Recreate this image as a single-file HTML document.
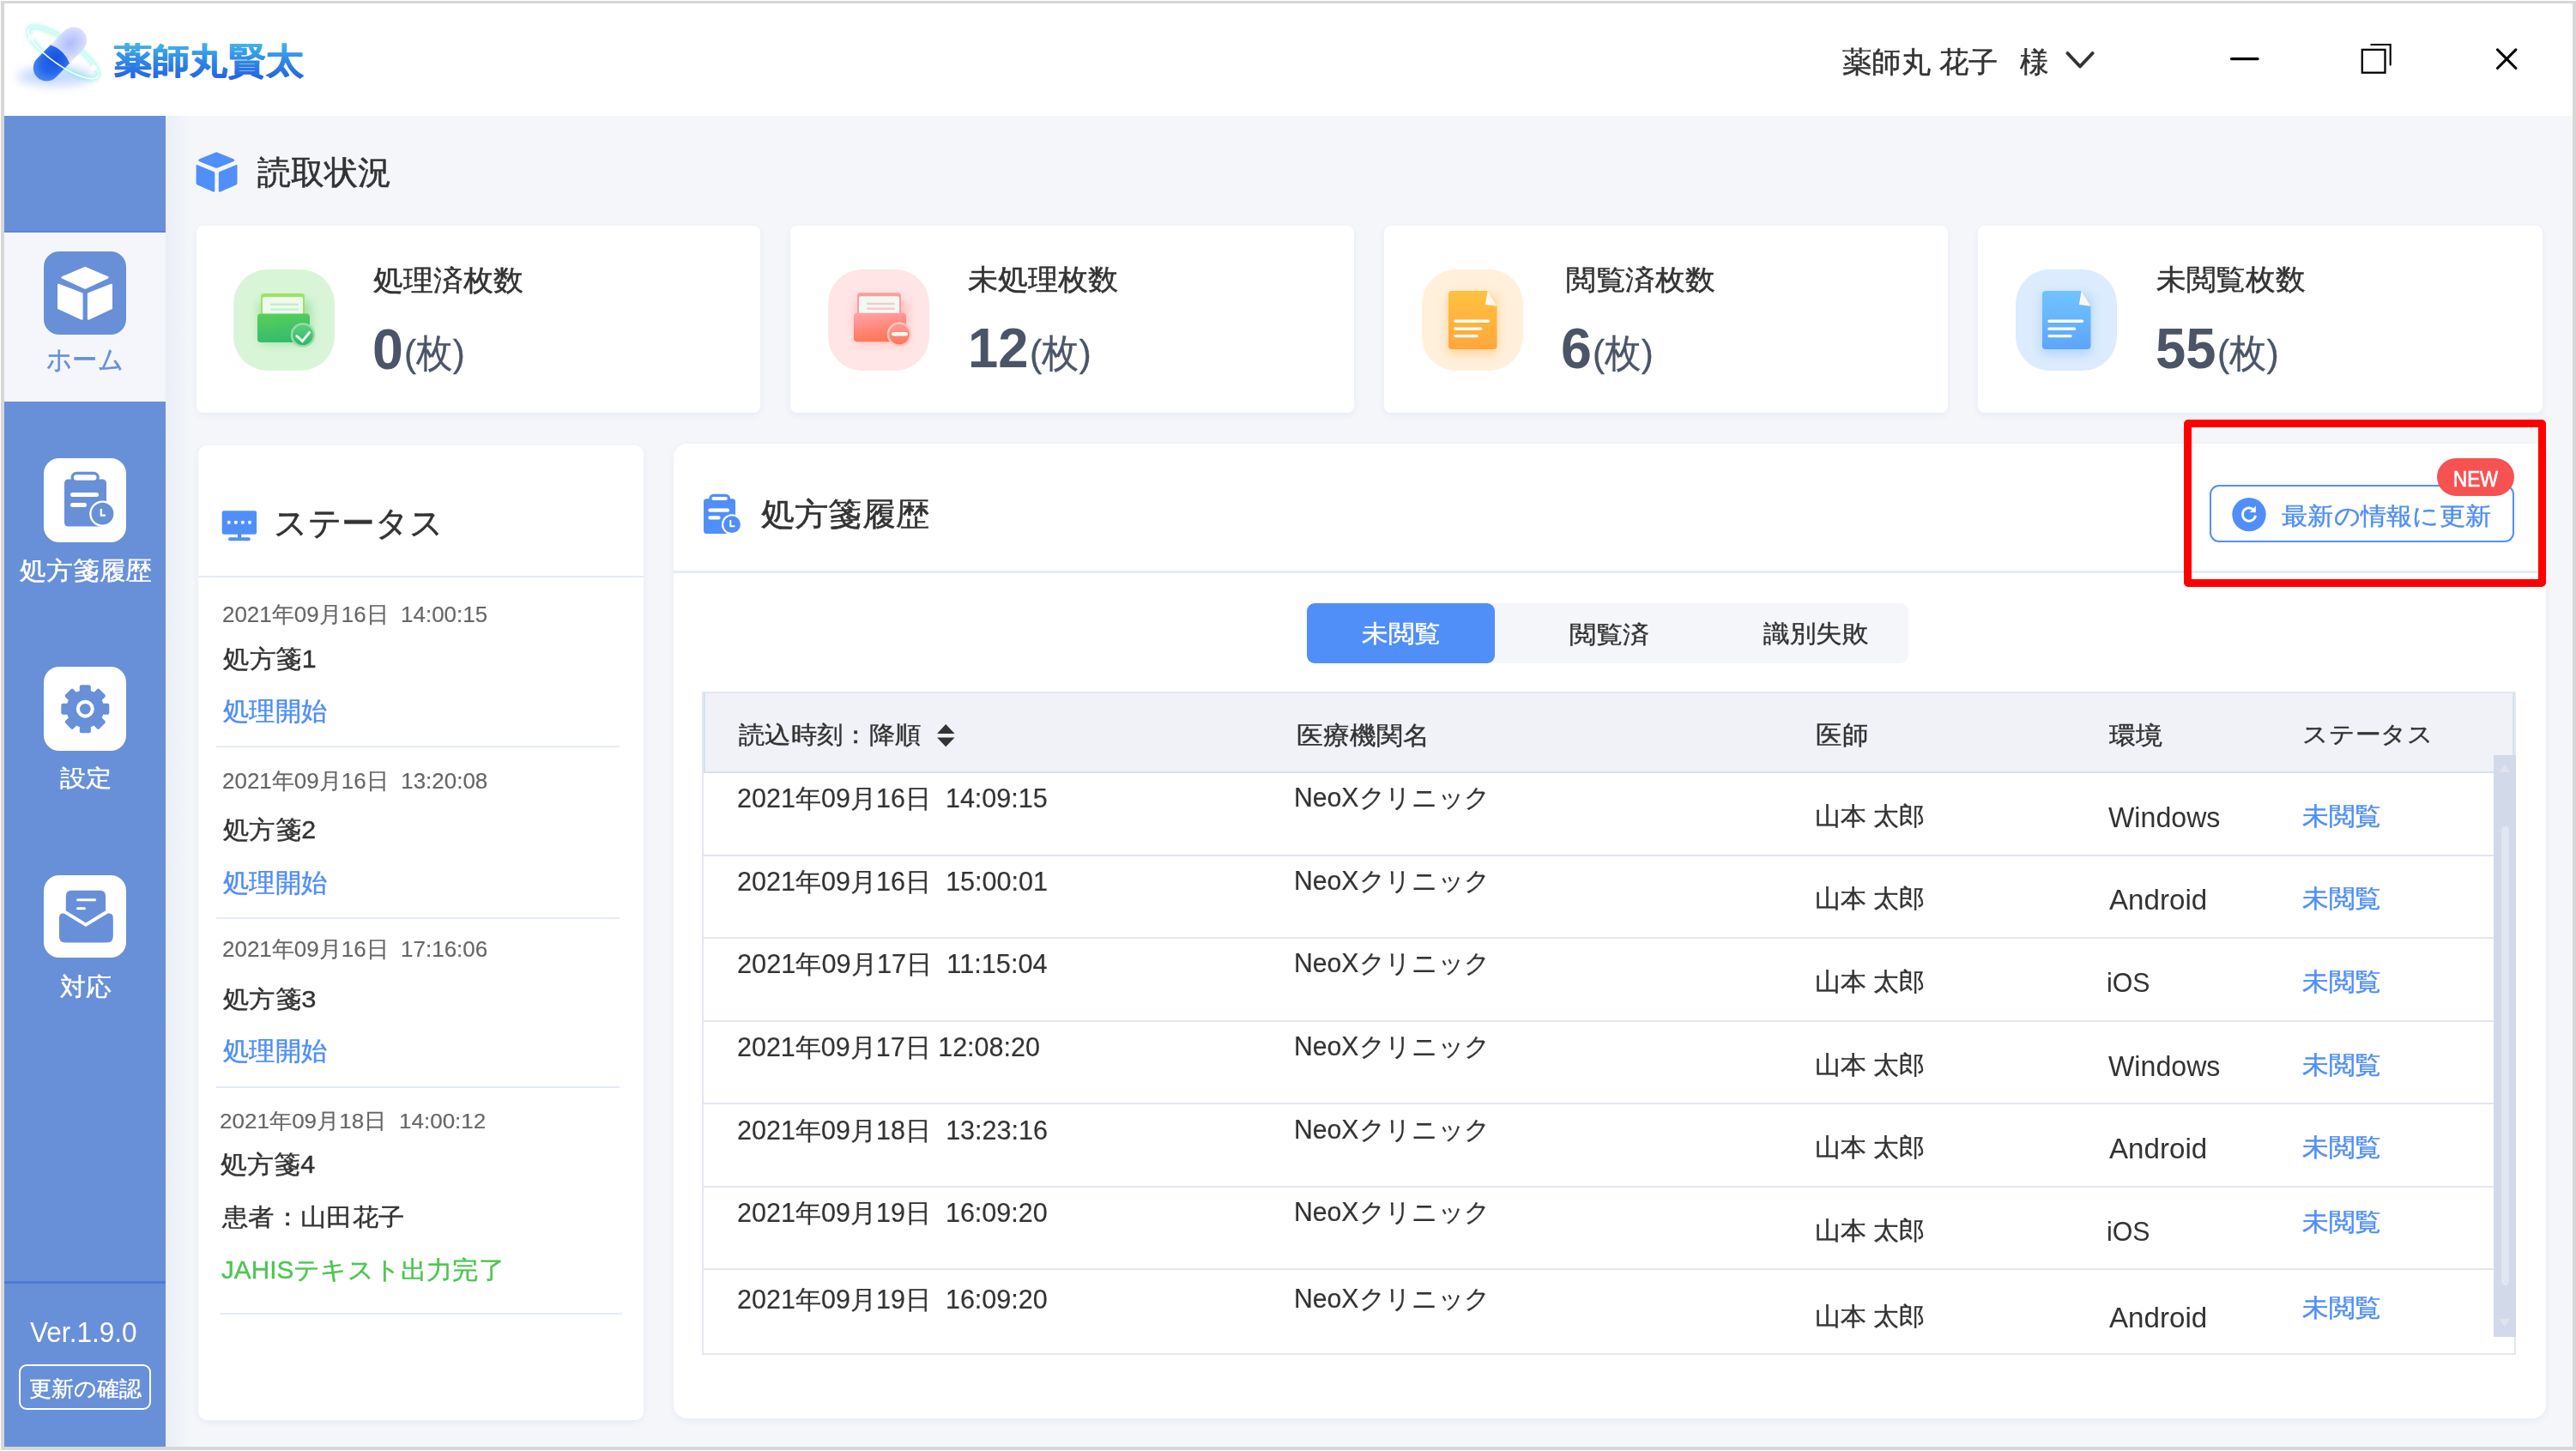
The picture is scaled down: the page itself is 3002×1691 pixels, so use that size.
<!DOCTYPE html>
<html lang="ja"><head><meta charset="utf-8"><title>薬師丸賢太</title>
<style>
html,body{margin:0;padding:0;}
body{width:3002px;height:1691px;position:relative;overflow:hidden;background:#ffffff;font-family:"Liberation Sans",sans-serif;}
.t{position:absolute;white-space:pre;line-height:1;transform-origin:0 0;}
</style></head><body>
<div style="position:absolute;left:1px;top:1px;width:3001px;height:1689px;background:#d7d7d7"></div>
<div style="position:absolute;left:5px;top:4px;width:2993px;height:1682px;background:#f4f6fa"></div>
<div style="position:absolute;left:5px;top:4px;width:2993px;height:131px;background:#ffffff"></div>
<svg style="position:absolute;left:0px;top:0px" width="135" height="125" viewBox="0 0 135 125">
<defs>
 <filter id="blur6" x="-50%" y="-50%" width="200%" height="200%"><feGaussianBlur stdDeviation="6"/></filter>
 <filter id="blur2" x="-50%" y="-50%" width="200%" height="200%"><feGaussianBlur stdDeviation="2.2"/></filter>
 <radialGradient id="pillDark" cx="0.62" cy="0.5" r="0.8" fx="0.75" fy="0.5">
  <stop offset="0" stop-color="#1552e2"/><stop offset="0.5" stop-color="#2566ea"/><stop offset="0.85" stop-color="#4d8cf4"/><stop offset="1" stop-color="#78b0fb"/>
 </radialGradient>
 <radialGradient id="pillLight" cx="0.45" cy="0.5" r="0.7">
  <stop offset="0" stop-color="#aebdfa"/><stop offset="0.6" stop-color="#cdd6fc"/><stop offset="1" stop-color="#eef0fe"/>
 </radialGradient>
</defs>
<ellipse cx="64" cy="89" rx="44" ry="11" fill="#8fb6ff" opacity="0.5" filter="url(#blur6)"/>
<g transform="translate(73.7 61.5) rotate(35)">
 <ellipse cx="0" cy="0" rx="48.5" ry="14.5" fill="none" stroke="#69f0dc" stroke-width="5" opacity="0.55" filter="url(#blur2)"/>
</g>
<g transform="translate(73.7 61.5) rotate(35)">
 <path d="M -48.5 0 A 48.5 14.5 0 0 1 48.5 0" fill="none" stroke="#e6fdf8" stroke-width="1.4"/>
</g>
<g transform="translate(70 63) rotate(-45.5)">
 <path d="M0 -15.5 H22.5 A15.5 15.5 0 0 1 22.5 15.5 H0 Z" fill="url(#pillLight)"/>
 <path d="M0 -15.5 H-22.5 A15.5 15.5 0 0 0 -22.5 15.5 H0 Q7 0 0 -15.5 Z" fill="url(#pillDark)"/>
</g>
<g transform="translate(73.7 61.5) rotate(35)">
 <path d="M -48.5 0 A 48.5 14.5 0 0 0 48.5 0" fill="none" stroke="#ffffff" stroke-width="1.6"/>
</g>
<circle cx="36.5" cy="43.6" r="3.6" fill="#ffffff"/>
<circle cx="109.2" cy="79.1" r="3.6" fill="#ffffff"/>
</svg>
<svg style="position:absolute;left:2400px;top:45px" width="560" height="50" viewBox="2400 45 560 50">
<path d="M2409.5 62 L2424 77.5 L2438.6 62" fill="none" stroke="#333" stroke-width="4" stroke-linecap="round" stroke-linejoin="round"/>
<line x1="2600.5" y1="68.6" x2="2631" y2="68.6" stroke="#000" stroke-width="3.3" stroke-linecap="round"/>
<rect x="2752.8" y="57.9" width="26.7" height="26.8" fill="none" stroke="#000" stroke-width="2.3"/>
<path d="M2763.3 52 H2785.7 V75.6" fill="none" stroke="#000" stroke-width="2.1" stroke-linecap="round"/>
<path d="M2910.5 57.9 L2931.9 79.5 M2931.9 57.9 L2910.5 79.5" stroke="#000" stroke-width="3.1" stroke-linecap="round"/>
</svg>
<div style="position:absolute;left:193px;top:135px;width:29px;height:1551px;background:linear-gradient(90deg,rgba(60,90,170,0.055),rgba(60,90,170,0))"></div>
<div style="position:absolute;left:5px;top:135px;width:188px;height:1551px;background:#6890d8"></div>
<div style="position:absolute;left:5px;top:269px;width:188px;height:2px;background:#5a84d4"></div>
<div style="position:absolute;left:5px;top:271px;width:188px;height:197px;background:#f4f6fb"></div>
<div style="position:absolute;left:5px;top:1493px;width:188px;height:2.5px;background:#4f7bd0"></div>
<div style="position:absolute;left:51px;top:293px;width:96.4px;height:97px;background:#6890d8;border-radius:18px"></div>
<div style="position:absolute;left:51px;top:533.6px;width:96.4px;height:98.19999999999993px;background:#ffffff;border-radius:18px"></div>
<div style="position:absolute;left:51px;top:776.8px;width:96.4px;height:98.10000000000002px;background:#ffffff;border-radius:18px"></div>
<div style="position:absolute;left:51px;top:1019.8px;width:96.4px;height:96.70000000000005px;background:#ffffff;border-radius:18px"></div>
<svg style="position:absolute;left:51px;top:293px" width="97" height="97" viewBox="0 0 97 97">
<g fill="#ffffff" stroke="#ffffff" stroke-width="2.4" stroke-linejoin="round">
<path d="M21.6 30.3 L48.2 19.1 L74.5 30.3 L48.2 42.6 Z"/>
<path d="M17.2 38.9 L44.4 49.3 L44.4 78.6 L17.2 66.2 Z"/>
<path d="M52.1 49.3 L78.8 38.9 L78.8 66.2 L52.1 78.6 Z"/>
</g></svg>
<svg style="position:absolute;left:51px;top:533.6px" width="97" height="98" viewBox="0 0 97 98">
<rect x="24" y="24.5" width="49" height="55" rx="4.5" fill="#6890d8"/>
<rect x="33.2" y="17.5" width="30" height="10" rx="5" fill="#ffffff" stroke="#6890d8" stroke-width="3.4"/>
<rect x="31" y="40" width="33" height="5" rx="2.5" fill="#ffffff"/>
<rect x="31" y="52" width="19" height="5" rx="2.5" fill="#ffffff"/>
<circle cx="68.5" cy="64.7" r="15.3" fill="#ffffff"/>
<circle cx="68.5" cy="64.7" r="12.9" fill="#6890d8"/>
<path d="M66.8 59 V66.6 H72" fill="none" stroke="#ffffff" stroke-width="2.2"/>
</svg>
<svg style="position:absolute;left:51px;top:776.8px" width="97" height="98" viewBox="0 0 97 98">
<g transform="translate(48.3 49.2)" fill="#6890d8">
<circle r="22"/>
<g id="teeth">
<rect x="-6.5" y="-28" width="13" height="10" rx="2"/>
<rect x="-6.5" y="18" width="13" height="10" rx="2"/>
<rect x="-28" y="-6.5" width="10" height="13" rx="2"/>
<rect x="18" y="-6.5" width="10" height="13" rx="2"/>
<g transform="rotate(45)">
<rect x="-6.5" y="-28" width="13" height="10" rx="2"/>
<rect x="-6.5" y="18" width="13" height="10" rx="2"/>
<rect x="-28" y="-6.5" width="10" height="13" rx="2"/>
<rect x="18" y="-6.5" width="10" height="13" rx="2"/>
</g></g>
<circle r="10.5" fill="#ffffff"/>
<circle r="6.3" fill="#6890d8"/>
</g></svg>
<svg style="position:absolute;left:51px;top:1019.8px" width="97" height="97" viewBox="0 0 97 97">
<path d="M25.8 24.3 Q25.8 17.8 32.3 17.8 H65.6 Q72.1 17.8 72.1 24.3 V41.2 L49 55.6 L25.8 41.2 Z" fill="#6890d8"/>
<rect x="38" y="27.3" width="23.1" height="3" rx="1.5" fill="#ffffff"/>
<rect x="38" y="37.2" width="11" height="3" rx="1.5" fill="#ffffff"/>
<path d="M17.9 50 Q17.9 43.8 23.6 44.6 L49 60 L74.6 44.6 Q80.8 43.8 80.8 50 V71.3 Q80.8 78.5 73.6 78.5 H25.1 Q17.9 78.5 17.9 71.3 Z" fill="#6890d8"/>
</svg>
<div style="position:absolute;left:22.4px;top:1590.4px;width:153.79999999999998px;height:53.09999999999991px;border:2.2px solid #ffffff;border-radius:9px;box-sizing:border-box"></div>
<svg style="position:absolute;left:226px;top:175px" width="54" height="52" viewBox="226 175 54 52">
<g fill="#508ff8">
<path d="M252.3 177.2 L272 185.2 Q274.5 186.7 272 188.2 L254 195.5 Q252.3 196.2 250.6 195.5 L232.6 188.2 Q230 186.7 232.6 185.2 Z"/>
<path d="M229.5 192 L249 200 Q250.3 200.6 250.3 202 L250.3 222.2 Q250.3 224.2 248.3 223.4 L230 215.4 Q228.6 214.7 228.6 213.3 L228.6 193 Q228.6 191.6 229.5 192 Z"/>
<path d="M275.6 192 L256.1 200 Q254.8 200.6 254.8 202 L254.8 222.2 Q254.8 224.2 256.8 223.4 L275.1 215.4 Q276.5 214.7 276.5 213.3 L276.5 193 Q276.5 191.6 275.6 192 Z"/>
</g></svg>
<div style="position:absolute;left:229px;top:262.5px;width:657px;height:218.5px;background:#ffffff;border-radius:8px;box-shadow:0 3px 8px rgba(40,70,140,0.06)"></div>
<div style="position:absolute;left:921px;top:262.5px;width:657px;height:218.5px;background:#ffffff;border-radius:8px;box-shadow:0 3px 8px rgba(40,70,140,0.06)"></div>
<div style="position:absolute;left:1613px;top:262.5px;width:657px;height:218.5px;background:#ffffff;border-radius:8px;box-shadow:0 3px 8px rgba(40,70,140,0.06)"></div>
<div style="position:absolute;left:2305px;top:262.5px;width:658px;height:218.5px;background:#ffffff;border-radius:8px;box-shadow:0 3px 8px rgba(40,70,140,0.06)"></div>
<div style="position:absolute;left:272px;top:314px;width:118px;height:118px;background:#d9f5d7;border-radius:40px"></div>
<div style="position:absolute;left:965px;top:314px;width:118px;height:118px;background:#ffe5e5;border-radius:40px"></div>
<div style="position:absolute;left:1657px;top:314px;width:118px;height:118px;background:#fff0dc;border-radius:40px"></div>
<div style="position:absolute;left:2349px;top:314px;width:118px;height:118px;background:#dcebfd;border-radius:40px"></div>
<svg style="position:absolute;left:272px;top:314px" width="118" height="118" viewBox="0 0 118 118">
<defs>
<linearGradient id="fggreen" x1="0" y1="0" x2="0.25" y2="1"><stop offset="0" stop-color="#5bcf57"/><stop offset="1" stop-color="#33bd6c"/></linearGradient>
<linearGradient id="bggreen" x1="0" y1="0" x2="0" y2="1"><stop offset="0" stop-color="#5bd07a"/><stop offset="1" stop-color="#2db86a"/></linearGradient>
<filter id="glgreen" x="-50%" y="-50%" width="200%" height="200%"><feGaussianBlur stdDeviation="6"/></filter>
</defs>
<g transform="translate(0 0)">
<rect x="30" y="36" width="60" height="50" rx="6" fill="#58c86a" opacity="0.45" filter="url(#glgreen)"/>
<rect x="32" y="28" width="51" height="26" rx="3.5" fill="#9de45f"/>
<rect x="34" y="32" width="47" height="22" rx="2" fill="#effaef"/>
<rect x="43" y="39.6" width="33" height="2.4" rx="1.2" fill="#c6ecd0"/>
<rect x="43" y="45.4" width="33" height="2.4" rx="1.2" fill="#c6ecd0"/>
<rect x="28" y="51.5" width="61" height="33.6" rx="4" fill="url(#fggreen)"/>
<circle cx="81" cy="76.4" r="14.2" fill="#9bdcae"/>
<circle cx="81" cy="76.4" r="11.8" fill="url(#bggreen)"/>
<path d="M74 77.7 L80.4 83.6 L88.5 73.6" fill="none" stroke="#ecfaef" stroke-width="2.9" stroke-linecap="square"/>
</g>
</svg>
<svg style="position:absolute;left:965px;top:314px" width="118" height="118" viewBox="0 0 118 118">
<defs>
<linearGradient id="fgred" x1="0" y1="0" x2="0.25" y2="1"><stop offset="0" stop-color="#ffa4ab"/><stop offset="1" stop-color="#ff7556"/></linearGradient>
<linearGradient id="bgred" x1="0" y1="0" x2="0" y2="1"><stop offset="0" stop-color="#ff9a9a"/><stop offset="1" stop-color="#ff7558"/></linearGradient>
<filter id="glred" x="-50%" y="-50%" width="200%" height="200%"><feGaussianBlur stdDeviation="6"/></filter>
</defs>
<g transform="translate(2 -0.8)">
<rect x="30" y="36" width="60" height="50" rx="6" fill="#ff8a80" opacity="0.45" filter="url(#glred)"/>
<rect x="32" y="28" width="51" height="26" rx="3.5" fill="#ff9b9f"/>
<rect x="34" y="32" width="47" height="22" rx="2" fill="#f0faf0"/>
<rect x="43" y="39.6" width="33" height="2.4" rx="1.2" fill="#f7c9cc"/>
<rect x="43" y="45.4" width="33" height="2.4" rx="1.2" fill="#f7c9cc"/>
<rect x="28" y="51.5" width="61" height="33.6" rx="4" fill="url(#fgred)"/>
<circle cx="81" cy="76.4" r="14.2" fill="#f7c8c2"/>
<circle cx="81" cy="76.4" r="11.8" fill="url(#bgred)"/>
<rect x="72" y="73.7" width="19" height="4.6" rx="2.3" fill="#f0faf0"/>
</g>
</svg>
<svg style="position:absolute;left:1657px;top:313px" width="118" height="118" viewBox="0 0 118 118">
<defs>
<linearGradient id="dgorange" x1="0" y1="0" x2="0" y2="1"><stop offset="0" stop-color="#ffc23f"/><stop offset="1" stop-color="#ffa63d"/></linearGradient>
<filter id="dglorange" x="-50%" y="-50%" width="200%" height="200%"><feGaussianBlur stdDeviation="6"/></filter>
</defs>
<rect x="30" y="30" width="58" height="70" rx="6" fill="#ffb04a" opacity="0.45" filter="url(#dglorange)"/>
<path d="M35 26 H76.6 L87.5 43.7 V90 Q87.5 94 83.5 94 H35 Q31 94 31 90 V30 Q31 26 35 26 Z" fill="url(#dgorange)"/>
<path d="M76.6 26 L87.5 43.7 L73.9 41.9 Z" fill="#fff6f3"/>
<rect x="37.4" y="59.6" width="41.6" height="3.3" rx="1.65" fill="#ffffff"/>
<rect x="37.4" y="68.5" width="32.8" height="3.3" rx="1.65" fill="#ffffff"/>
<rect x="37.4" y="76.9" width="28.4" height="3.3" rx="1.65" fill="#ffffff"/>
</svg>
<svg style="position:absolute;left:2349px;top:313px" width="118" height="118" viewBox="0 0 118 118">
<defs>
<linearGradient id="dgblue" x1="0" y1="0" x2="0" y2="1"><stop offset="0" stop-color="#70c4fd"/><stop offset="1" stop-color="#5ea4fb"/></linearGradient>
<filter id="dglblue" x="-50%" y="-50%" width="200%" height="200%"><feGaussianBlur stdDeviation="6"/></filter>
</defs>
<rect x="30" y="30" width="58" height="70" rx="6" fill="#7ab8fb" opacity="0.45" filter="url(#dglblue)"/>
<path d="M35 26 H76.6 L87.5 43.7 V90 Q87.5 94 83.5 94 H35 Q31 94 31 90 V30 Q31 26 35 26 Z" fill="url(#dgblue)"/>
<path d="M76.6 26 L87.5 43.7 L73.9 41.9 Z" fill="#fff6f3"/>
<rect x="37.4" y="59.6" width="41.6" height="3.3" rx="1.65" fill="#ffffff"/>
<rect x="37.4" y="68.5" width="32.8" height="3.3" rx="1.65" fill="#ffffff"/>
<rect x="37.4" y="76.9" width="28.4" height="3.3" rx="1.65" fill="#ffffff"/>
</svg>
<div style="position:absolute;left:230.8px;top:519px;width:519.2px;height:1136px;background:#ffffff;border-radius:10px;box-shadow:0 3px 8px rgba(40,70,140,0.06)"></div>
<div style="position:absolute;left:231px;top:671px;width:519px;height:2px;background:#e4ebf7"></div>
<div style="position:absolute;left:252px;top:869px;width:470px;height:2px;background:#e4ebf7"></div>
<div style="position:absolute;left:252px;top:1068.5px;width:470px;height:2.0px;background:#e4ebf7"></div>
<div style="position:absolute;left:252px;top:1266px;width:470px;height:2px;background:#e4ebf7"></div>
<div style="position:absolute;left:256px;top:1529.5px;width:469px;height:2.0px;background:#e4ebf7"></div>
<svg style="position:absolute;left:256px;top:593px" width="46" height="40" viewBox="256 593 46 40">
<rect x="258.7" y="595.2" width="40.4" height="27.5" rx="2.2" fill="#508ff8"/>
<rect x="277" y="622" width="4.2" height="5" fill="#508ff8"/>
<rect x="266" y="626.2" width="25.8" height="4" rx="2" fill="#508ff8"/>
<circle cx="266.8" cy="608.8" r="2.1" fill="#fff"/><circle cx="274.8" cy="608.8" r="2.1" fill="#fff"/>
<circle cx="282.8" cy="608.8" r="2.1" fill="#fff"/><circle cx="291" cy="608.8" r="2.1" fill="#fff"/>
</svg>
<div style="position:absolute;left:785px;top:516.5px;width:2182px;height:1136.5px;background:#ffffff;border-radius:16px;box-shadow:0 3px 8px rgba(40,70,140,0.06)"></div>
<div style="position:absolute;left:785px;top:665px;width:2182px;height:2.5px;background:#e4ebf7"></div>
<svg style="position:absolute;left:815px;top:570px" width="52" height="56" viewBox="815 570 52 56">
<rect x="820" y="581.2" width="37" height="40.8" rx="3.5" fill="#508ff8"/>
<rect x="827.8" y="577.3" width="21.6" height="7.2" rx="3.6" fill="#ffffff" stroke="#508ff8" stroke-width="3.2"/>
<rect x="825.4" y="592.6" width="24.6" height="4.1" rx="2" fill="#fff"/>
<rect x="825.4" y="601.3" width="14.2" height="4.3" rx="2" fill="#fff"/>
<circle cx="853" cy="611.2" r="12" fill="#fff"/>
<circle cx="853" cy="611.2" r="9.9" fill="#508ff8"/>
<path d="M851.3 606 V613.2 H856.3" fill="none" stroke="#fff" stroke-width="2"/>
</svg>
<div style="position:absolute;left:2575px;top:565px;width:355px;height:67px;border:2px solid #5090f8;border-radius:11px;box-sizing:border-box;background:#fff"></div>
<svg style="position:absolute;left:2599px;top:578px" width="44" height="44" viewBox="2599 578 44 44">
<circle cx="2621" cy="599.6" r="19.7" fill="#508ff8"/>
<path d="M2625.4 593.4 A 7.6 7.6 0 1 0 2628.5 600.7" fill="none" stroke="#fff" stroke-width="2.9"/>
<path d="M2628.9 589.6 L2628.9 597.2 L2621.6 597 Z" fill="#fff"/>
</svg>
<div style="position:absolute;left:2840px;top:534px;width:90px;height:44px;background:#f65252;border-radius:22px"></div>
<div style="position:absolute;left:1523px;top:703px;width:701px;height:70px;background:#f4f6fa;border-radius:9px"></div>
<div style="position:absolute;left:1523px;top:703px;width:219px;height:70px;background:#508ff8;border-radius:9px"></div>
<div style="position:absolute;left:818px;top:806px;width:2113.5px;height:772.5px;background:#ffffff;border:2px solid #e3e8f0;box-sizing:border-box"></div>
<div style="position:absolute;left:820px;top:808px;width:2110px;height:92.5px;background:#f0f2f7;border-left:2px solid #d3e2ee;border-right:2px solid #d3e2ee;box-sizing:border-box"></div>
<div style="position:absolute;left:820px;top:898.5px;width:2110px;height:2.2999999999999545px;background:#d5e2ee"></div>
<div style="position:absolute;left:820px;top:996px;width:2086px;height:2px;background:#e2e7f0"></div>
<div style="position:absolute;left:820px;top:1092px;width:2086px;height:2px;background:#e2e7f0"></div>
<div style="position:absolute;left:820px;top:1189px;width:2086px;height:2px;background:#e2e7f0"></div>
<div style="position:absolute;left:820px;top:1285px;width:2086px;height:2px;background:#e2e7f0"></div>
<div style="position:absolute;left:820px;top:1382px;width:2086px;height:2px;background:#e2e7f0"></div>
<div style="position:absolute;left:820px;top:1478px;width:2086px;height:2px;background:#e2e7f0"></div>
<svg style="position:absolute;left:1090px;top:842px" width="25" height="30" viewBox="1090 842 25 30">
<path d="M1102.2 843.9 L1112.5 855 L1092 855 Z" fill="#333"/>
<path d="M1102.2 870.3 L1112.5 859.6 L1092 859.6 Z" fill="#333"/>
</svg>
<div style="position:absolute;left:2906px;top:880px;width:25.5px;height:678px;background:#d2d9e8"></div>
<div style="position:absolute;left:2914.7px;top:963px;width:9.100000000000364px;height:535px;background:#e0e7f3;border-radius:5px"></div>
<svg style="position:absolute;left:2906px;top:880px" width="26" height="680" viewBox="2906 880 26 680">
<path d="M2919 890.5 L2925.5 900 L2912.5 900 Z" fill="#e0e3ec"/>
<path d="M2919 1546 L2925.5 1537 L2912.5 1537 Z" fill="#e0e3ec"/>
</svg>
<div style="position:absolute;left:2545px;top:489px;width:422px;height:195px;border:9px solid #ff0000;border-radius:5px;box-sizing:border-box"></div>
<svg style="position:absolute;left:0;top:0" width="420" height="135" viewBox="0 0 420 135"><defs><linearGradient id="logoG" x1="0" y1="0" x2="0" y2="1"><stop offset="0" stop-color="#46bcea"/><stop offset="0.5" stop-color="#2f88e6"/><stop offset="1" stop-color="#2360e2"/></linearGradient></defs><text transform="translate(132.50 85.00) scale(1.0714 1)" x="0" y="0" font-family="Liberation Sans, sans-serif" font-size="41.35" font-weight="700" fill="url(#logoG)" stroke="url(#logoG)" stroke-width="0.9" stroke-linejoin="round">薬師丸賢太</text></svg>
<div class="t" style="left:2146.81px;top:54.92px;font-size:34.11px;font-weight:400;color:#333333;-webkit-text-stroke:0.48px #333333;transform:scaleX(1.0102)">薬師丸 花子</div>
<div class="t" style="left:2353.66px;top:54.58px;font-size:34.11px;font-weight:400;color:#333333;-webkit-text-stroke:0.48px #333333;transform:scaleX(0.9877)">様</div>
<div class="t" style="left:54.31px;top:404.24px;font-size:31.75px;font-weight:400;color:#6890d8;-webkit-text-stroke:0.44px #6890d8;transform:scaleX(0.9203)">ホーム</div>
<div class="t" style="left:23.09px;top:650.80px;font-size:28.78px;font-weight:400;color:#ffffff;-webkit-text-stroke:0.40px #ffffff;transform:scaleX(1.0643)">処方箋履歴</div>
<div class="t" style="left:69.69px;top:893.20px;font-size:27.17px;font-weight:400;color:#ffffff;-webkit-text-stroke:0.38px #ffffff;transform:scaleX(1.1233)">設定</div>
<div class="t" style="left:69.70px;top:1136.00px;font-size:28.85px;font-weight:400;color:#ffffff;-webkit-text-stroke:0.40px #ffffff;transform:scaleX(1.0362)">対応</div>
<div class="t" style="left:35.48px;top:1537.06px;font-size:32.96px;font-weight:400;color:#ffffff;transform:scaleX(0.9577)">Ver.1.9.0</div>
<div class="t" style="left:33.50px;top:1606.25px;font-size:24.95px;font-weight:400;color:#ffffff;-webkit-text-stroke:0.35px #ffffff;transform:scaleX(1.0404)">更新の確認</div>
<div class="t" style="left:299.81px;top:182.65px;font-size:37.60px;font-weight:400;color:#333333;-webkit-text-stroke:0.53px #333333;transform:scaleX(1.0302)">読取状況</div>
<div class="t" style="left:435.25px;top:311.17px;font-size:32.58px;font-weight:400;color:#333333;-webkit-text-stroke:0.46px #333333;transform:scaleX(1.0572)">処理済枚数</div>
<div class="t" style="left:1127.80px;top:308.75px;font-size:33.25px;font-weight:400;color:#333333;-webkit-text-stroke:0.47px #333333;transform:scaleX(1.0636)">未処理枚数</div>
<div class="t" style="left:1824.61px;top:309.68px;font-size:32.32px;font-weight:400;color:#333333;-webkit-text-stroke:0.45px #333333;transform:scaleX(1.0858)">閲覧済枚数</div>
<div class="t" style="left:2512.81px;top:309.01px;font-size:32.99px;font-weight:400;color:#333333;-webkit-text-stroke:0.46px #333333;transform:scaleX(1.0502)">未閲覧枚数</div>
<div class="t" style="left:434.42px;top:373.96px;font-size:66.90px;font-weight:700;color:#4b5567;transform:scaleX(0.9654)">0</div>
<div class="t" style="left:1128.20px;top:373.14px;font-size:65.71px;font-weight:700;color:#4b5567;transform:scaleX(0.9643)">12</div>
<div class="t" style="left:1819.42px;top:373.07px;font-size:66.20px;font-weight:700;color:#4b5567;transform:scaleX(0.9756)">6</div>
<div class="t" style="left:2511.60px;top:372.26px;font-size:67.14px;font-weight:700;color:#4b5567;transform:scaleX(0.9433)">55</div>
<div class="t" style="left:471.47px;top:390.22px;font-size:44.61px;font-weight:400;color:#4b5567;-webkit-text-stroke:0.28px #4b5567;transform:scaleX(0.9462)">(枚)</div>
<div class="t" style="left:1199.93px;top:390.22px;font-size:44.61px;font-weight:400;color:#4b5567;-webkit-text-stroke:0.28px #4b5567;transform:scaleX(0.9608)">(枚)</div>
<div class="t" style="left:1856.47px;top:390.22px;font-size:44.61px;font-weight:400;color:#4b5567;-webkit-text-stroke:0.28px #4b5567;transform:scaleX(0.9462)">(枚)</div>
<div class="t" style="left:2584.43px;top:390.22px;font-size:44.61px;font-weight:400;color:#4b5567;-webkit-text-stroke:0.28px #4b5567;transform:scaleX(0.9608)">(枚)</div>
<div class="t" style="left:319.49px;top:590.36px;font-size:39.43px;font-weight:400;color:#333333;-webkit-text-stroke:0.55px #333333;transform:scaleX(0.9914)">ステータス</div>
<div class="t" style="left:259.00px;top:703.61px;font-size:25.87px;font-weight:400;color:#666666;-webkit-text-stroke:0.16px #666666;transform:scaleX(1.0032)">2021年09月16日  14:00:15</div>
<div class="t" style="left:260.00px;top:753.70px;font-size:28.78px;font-weight:400;color:#333333;-webkit-text-stroke:0.40px #333333;transform:scaleX(1.0535)">処方箋1</div>
<div class="t" style="left:260.30px;top:814.31px;font-size:29.89px;font-weight:400;color:#4f8ef7;-webkit-text-stroke:0.42px #4f8ef7;transform:scaleX(1.0086)">処理開始</div>
<div class="t" style="left:259.00px;top:897.71px;font-size:25.87px;font-weight:400;color:#666666;-webkit-text-stroke:0.16px #666666;transform:scaleX(1.0039)">2021年09月16日  13:20:08</div>
<div class="t" style="left:260.00px;top:953.00px;font-size:28.88px;font-weight:400;color:#333333;-webkit-text-stroke:0.40px #333333;transform:scaleX(1.0498)">処方箋2</div>
<div class="t" style="left:260.30px;top:1013.51px;font-size:29.79px;font-weight:400;color:#4f8ef7;-webkit-text-stroke:0.42px #4f8ef7;transform:scaleX(1.0122)">処理開始</div>
<div class="t" style="left:259.00px;top:1093.40px;font-size:25.98px;font-weight:400;color:#666666;-webkit-text-stroke:0.16px #666666;transform:scaleX(1.0005)">2021年09月16日  17:16:06</div>
<div class="t" style="left:260.00px;top:1150.30px;font-size:28.47px;font-weight:400;color:#333333;-webkit-text-stroke:0.40px #333333;transform:scaleX(1.0863)">処方箋3</div>
<div class="t" style="left:260.30px;top:1210.39px;font-size:30.21px;font-weight:400;color:#4f8ef7;-webkit-text-stroke:0.42px #4f8ef7;transform:scaleX(1.0098)">処理開始</div>
<div class="t" style="left:256.40px;top:1295.16px;font-size:24.78px;font-weight:400;color:#666666;-webkit-text-stroke:0.16px #666666;transform:scaleX(1.0505)">2021年09月18日  14:00:12</div>
<div class="t" style="left:257.39px;top:1343.00px;font-size:28.57px;font-weight:400;color:#333333;-webkit-text-stroke:0.40px #333333;transform:scaleX(1.0709)">処方箋4</div>
<div class="t" style="left:258.70px;top:1405.14px;font-size:27.84px;font-weight:400;color:#333333;-webkit-text-stroke:0.39px #333333;transform:scaleX(1.0835)">患者：山田花子</div>
<div class="t" style="left:257.50px;top:1465.50px;font-size:28.57px;font-weight:400;color:#4cc552;-webkit-text-stroke:0.40px #4cc552;transform:scaleX(1.0405)">JAHISテキスト出力完了</div>
<div class="t" style="left:886.71px;top:581.90px;font-size:36.84px;font-weight:400;color:#333333;-webkit-text-stroke:0.52px #333333;transform:scaleX(1.0607)">処方箋履歴</div>
<div class="t" style="left:2659.39px;top:587.72px;font-size:27.84px;font-weight:400;color:#4f8ef7;-webkit-text-stroke:0.39px #4f8ef7;transform:scaleX(1.0806)">最新の情報に更新</div>
<div class="t" style="left:2858.51px;top:544.58px;font-size:26.38px;font-weight:400;color:#ffffff;-webkit-text-stroke:0.7px #ffffff;transform:scaleX(0.8492)">NEW</div>
<div class="t" style="left:1587.38px;top:725.16px;font-size:28.12px;font-weight:400;color:#ffffff;-webkit-text-stroke:0.39px #ffffff;transform:scaleX(1.0959)">未閲覧</div>
<div class="t" style="left:1828.78px;top:725.72px;font-size:27.55px;font-weight:400;color:#333333;-webkit-text-stroke:0.39px #333333;transform:scaleX(1.1101)">閲覧済</div>
<div class="t" style="left:2054.70px;top:725.44px;font-size:27.84px;font-weight:400;color:#333333;-webkit-text-stroke:0.39px #333333;transform:scaleX(1.0914)">識別失敗</div>
<div class="t" style="left:861.20px;top:842.72px;font-size:28.00px;font-weight:400;color:#333333;-webkit-text-stroke:0.39px #333333;transform:scaleX(1.0848)">読込時刻：降順</div>
<div class="t" style="left:1510.95px;top:842.51px;font-size:28.57px;font-weight:400;color:#333333;-webkit-text-stroke:0.40px #333333;transform:scaleX(1.0663)">医療機関名</div>
<div class="t" style="left:2115.66px;top:841.59px;font-size:30.11px;font-weight:400;color:#333333;-webkit-text-stroke:0.42px #333333;transform:scaleX(1.0176)">医師</div>
<div class="t" style="left:2457.50px;top:843.10px;font-size:28.56px;font-weight:400;color:#333333;-webkit-text-stroke:0.40px #333333;transform:scaleX(1.0719)">環境</div>
<div class="t" style="left:2683.28px;top:841.86px;font-size:27.44px;font-weight:400;color:#333333;-webkit-text-stroke:0.38px #333333;transform:scaleX(1.1006)">ステータス</div>
<div class="t" style="left:859.08px;top:915.48px;font-size:30.43px;font-weight:400;color:#333333;-webkit-text-stroke:0.19px #333333;transform:scaleX(1.0027)">2021年09月16日  14:09:15</div>
<div class="t" style="left:1508.28px;top:914.34px;font-size:30.46px;font-weight:400;color:#333333;-webkit-text-stroke:0.19px #333333;transform:scaleX(0.9912)">NeoXクリニック</div>
<div class="t" style="left:2115.49px;top:937.00px;font-size:28.57px;font-weight:400;color:#333333;-webkit-text-stroke:0.40px #333333;transform:scaleX(1.0335)">山本 太郎</div>
<div class="t" style="left:2457.28px;top:936.33px;font-size:33.92px;font-weight:400;color:#333333;transform:scaleX(0.9484)">Windows</div>
<div class="t" style="left:2683.29px;top:936.42px;font-size:29.38px;font-weight:400;color:#4f8ef7;-webkit-text-stroke:0.41px #4f8ef7;transform:scaleX(1.0591)">未閲覧</div>
<div class="t" style="left:859.08px;top:1012.48px;font-size:30.43px;font-weight:400;color:#333333;-webkit-text-stroke:0.19px #333333;transform:scaleX(1.0036)">2021年09月16日  15:00:01</div>
<div class="t" style="left:1508.28px;top:1011.34px;font-size:30.46px;font-weight:400;color:#333333;-webkit-text-stroke:0.19px #333333;transform:scaleX(0.9912)">NeoXクリニック</div>
<div class="t" style="left:2115.49px;top:1033.00px;font-size:28.57px;font-weight:400;color:#333333;-webkit-text-stroke:0.40px #333333;transform:scaleX(1.0335)">山本 太郎</div>
<div class="t" style="left:2457.60px;top:1032.33px;font-size:33.92px;font-weight:400;color:#333333;transform:scaleX(0.9769)">Android</div>
<div class="t" style="left:2683.29px;top:1032.32px;font-size:29.38px;font-weight:400;color:#4f8ef7;-webkit-text-stroke:0.41px #4f8ef7;transform:scaleX(1.0591)">未閲覧</div>
<div class="t" style="left:859.07px;top:1108.48px;font-size:30.43px;font-weight:400;color:#333333;-webkit-text-stroke:0.19px #333333;transform:scaleX(1.0087)">2021年09月17日  11:15:04</div>
<div class="t" style="left:1508.28px;top:1107.34px;font-size:30.46px;font-weight:400;color:#333333;-webkit-text-stroke:0.19px #333333;transform:scaleX(0.9912)">NeoXクリニック</div>
<div class="t" style="left:2115.49px;top:1130.00px;font-size:28.57px;font-weight:400;color:#333333;-webkit-text-stroke:0.40px #333333;transform:scaleX(1.0335)">山本 太郎</div>
<div class="t" style="left:2455.48px;top:1129.59px;font-size:31.76px;font-weight:400;color:#333333;transform:scaleX(0.9548)">iOS</div>
<div class="t" style="left:2683.29px;top:1129.12px;font-size:29.38px;font-weight:400;color:#4f8ef7;-webkit-text-stroke:0.41px #4f8ef7;transform:scaleX(1.0591)">未閲覧</div>
<div class="t" style="left:859.08px;top:1205.48px;font-size:30.43px;font-weight:400;color:#333333;-webkit-text-stroke:0.19px #333333;transform:scaleX(1.0017)">2021年09月17日 12:08:20</div>
<div class="t" style="left:1508.28px;top:1204.34px;font-size:30.46px;font-weight:400;color:#333333;-webkit-text-stroke:0.19px #333333;transform:scaleX(0.9912)">NeoXクリニック</div>
<div class="t" style="left:2115.49px;top:1227.00px;font-size:28.57px;font-weight:400;color:#333333;-webkit-text-stroke:0.40px #333333;transform:scaleX(1.0335)">山本 太郎</div>
<div class="t" style="left:2457.28px;top:1226.33px;font-size:33.92px;font-weight:400;color:#333333;transform:scaleX(0.9484)">Windows</div>
<div class="t" style="left:2683.29px;top:1226.12px;font-size:29.38px;font-weight:400;color:#4f8ef7;-webkit-text-stroke:0.41px #4f8ef7;transform:scaleX(1.0591)">未閲覧</div>
<div class="t" style="left:859.08px;top:1302.48px;font-size:30.43px;font-weight:400;color:#333333;-webkit-text-stroke:0.19px #333333;transform:scaleX(1.0036)">2021年09月18日  13:23:16</div>
<div class="t" style="left:1508.28px;top:1301.34px;font-size:30.46px;font-weight:400;color:#333333;-webkit-text-stroke:0.19px #333333;transform:scaleX(0.9912)">NeoXクリニック</div>
<div class="t" style="left:2115.49px;top:1323.00px;font-size:28.57px;font-weight:400;color:#333333;-webkit-text-stroke:0.40px #333333;transform:scaleX(1.0335)">山本 太郎</div>
<div class="t" style="left:2457.60px;top:1322.33px;font-size:33.92px;font-weight:400;color:#333333;transform:scaleX(0.9769)">Android</div>
<div class="t" style="left:2683.29px;top:1322.12px;font-size:29.38px;font-weight:400;color:#4f8ef7;-webkit-text-stroke:0.41px #4f8ef7;transform:scaleX(1.0591)">未閲覧</div>
<div class="t" style="left:859.08px;top:1398.48px;font-size:30.43px;font-weight:400;color:#333333;-webkit-text-stroke:0.19px #333333;transform:scaleX(1.0027)">2021年09月19日  16:09:20</div>
<div class="t" style="left:1508.28px;top:1397.34px;font-size:30.46px;font-weight:400;color:#333333;-webkit-text-stroke:0.19px #333333;transform:scaleX(0.9912)">NeoXクリニック</div>
<div class="t" style="left:2115.49px;top:1420.40px;font-size:28.57px;font-weight:400;color:#333333;-webkit-text-stroke:0.40px #333333;transform:scaleX(1.0335)">山本 太郎</div>
<div class="t" style="left:2455.48px;top:1419.99px;font-size:31.76px;font-weight:400;color:#333333;transform:scaleX(0.9548)">iOS</div>
<div class="t" style="left:2683.29px;top:1409.42px;font-size:29.38px;font-weight:400;color:#4f8ef7;-webkit-text-stroke:0.41px #4f8ef7;transform:scaleX(1.0591)">未閲覧</div>
<div class="t" style="left:859.08px;top:1499.48px;font-size:30.43px;font-weight:400;color:#333333;-webkit-text-stroke:0.19px #333333;transform:scaleX(1.0027)">2021年09月19日  16:09:20</div>
<div class="t" style="left:1508.28px;top:1498.34px;font-size:30.46px;font-weight:400;color:#333333;-webkit-text-stroke:0.19px #333333;transform:scaleX(0.9912)">NeoXクリニック</div>
<div class="t" style="left:2115.49px;top:1520.00px;font-size:28.57px;font-weight:400;color:#333333;-webkit-text-stroke:0.40px #333333;transform:scaleX(1.0335)">山本 太郎</div>
<div class="t" style="left:2457.60px;top:1519.33px;font-size:33.92px;font-weight:400;color:#333333;transform:scaleX(0.9769)">Android</div>
<div class="t" style="left:2683.29px;top:1508.52px;font-size:29.38px;font-weight:400;color:#4f8ef7;-webkit-text-stroke:0.41px #4f8ef7;transform:scaleX(1.0591)">未閲覧</div>
</body></html>
